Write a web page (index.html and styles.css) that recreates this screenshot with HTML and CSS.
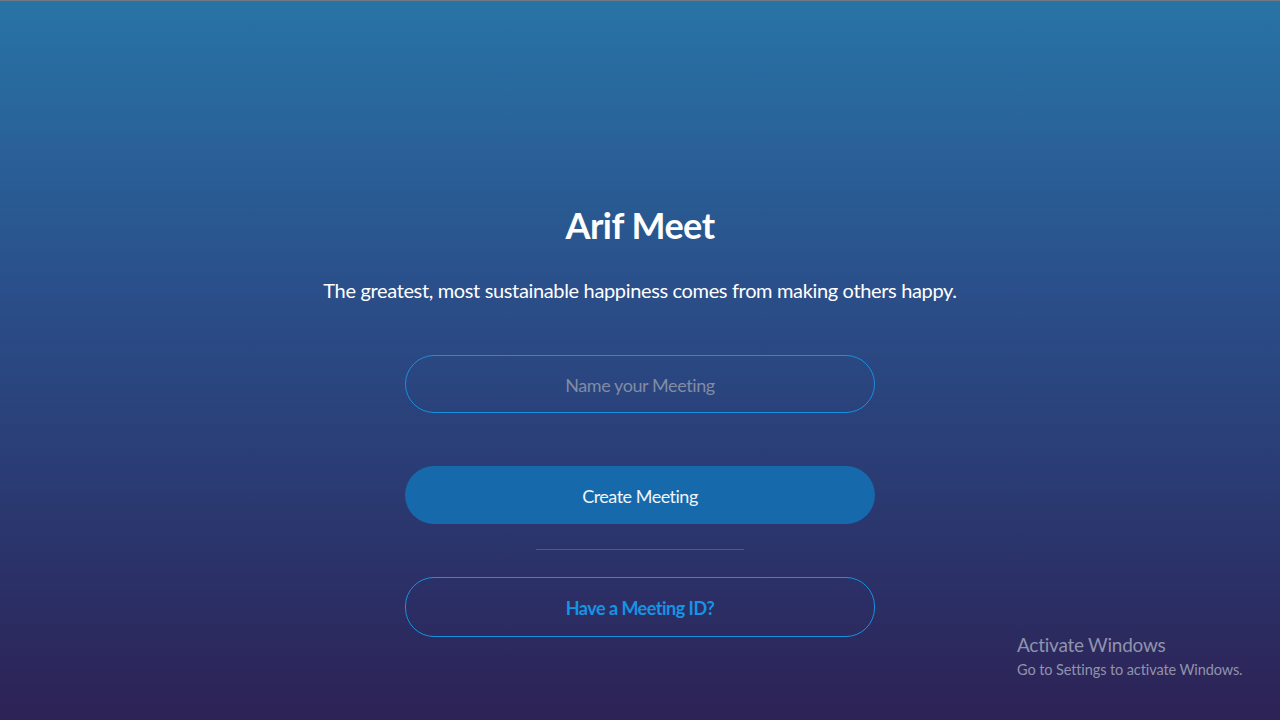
FILE: index.html
```html
<!DOCTYPE html>
<html lang="en">
<head>
<meta charset="utf-8">
<title>Arif Meet</title>
<link rel="stylesheet" href="styles.css">
</head>
<body>
<main class="page">
  <section class="hero">
    <h1 class="title">Arif Meet</h1>
    <p class="tagline">The greatest, most sustainable happiness comes from making others happy.</p>
    <input class="field" type="text" placeholder="Name your Meeting">
    <button class="btn btn-primary" type="button">Create Meeting</button>
    <div class="divider"></div>
    <button class="btn btn-outline" type="button">Have a Meeting ID?</button>
  </section>
  <aside class="watermark">
    <div class="wm-title">Activate Windows</div>
    <div class="wm-sub">Go to Settings to activate Windows.</div>
  </aside>
</main>
</body>
</html>
```

FILE: styles.css
```css
html, body {
  margin: 0;
  padding: 0;
  height: 100%;
}
body {
  font-family: Lato, "Open Sans", sans-serif;
  color: #fff;
  border-top: 1px solid #707a84;
  box-sizing: border-box;
  background: linear-gradient(180deg, #2874a6 0%, #2a4f8a 40%, #2b3168 80%, #2d2255 100%);
  overflow: hidden;
}
.page {
  position: relative;
  height: 719px;
}
.hero {
  display: flex;
  flex-direction: column;
  align-items: center;
  padding-top: 200px;
}
.title {
  margin: 0;
  font-size: 36px;
  font-weight: 700;
  letter-spacing: -0.5px;
  line-height: 48px;
}
.tagline {
  margin: 27px 0 0;
  font-size: 20px;
  letter-spacing: -0.35px;
  line-height: 28px;
}
.field {
  margin-top: 51px;
  width: 470px;
  height: 58px;
  box-sizing: border-box;
  padding: 2px 0 0;
  border: 1px solid #1591e0;
  border-radius: 29px;
  background: transparent;
  color: #fff;
  font-family: inherit;
  font-size: 18px;
  letter-spacing: -0.4px;
  text-align: center;
  outline: none;
}
.field::placeholder {
  color: #808ca6;
}
.btn {
  width: 470px;
  height: 58px;
  box-sizing: border-box;
  padding: 2px 0 0;
  border-radius: 29px;
  font-family: inherit;
  font-size: 18px;
  letter-spacing: -0.5px;
  cursor: pointer;
}
.btn-primary {
  margin-top: 53px;
  border: none;
  background: #166aab;
  color: #f2f4f8;
}
.divider {
  margin-top: 25px;
  width: 208px;
  height: 1px;
  background: #1a6cb2;
}
.btn-outline {
  margin-top: 27px;
  height: 60px;
  border: 1px solid #1591e0;
  background: transparent;
  color: #1594e4;
  font-weight: 700;
}
.watermark {
  position: absolute;
  left: 1017px;
  top: 631px;
  color: #9093ad;
}
.wm-title {
  font-size: 19px;
  letter-spacing: -0.25px;
  line-height: 26px;
}
.wm-sub {
  font-size: 14.5px;
  letter-spacing: -0.1px;
  line-height: 24px;
}
```
